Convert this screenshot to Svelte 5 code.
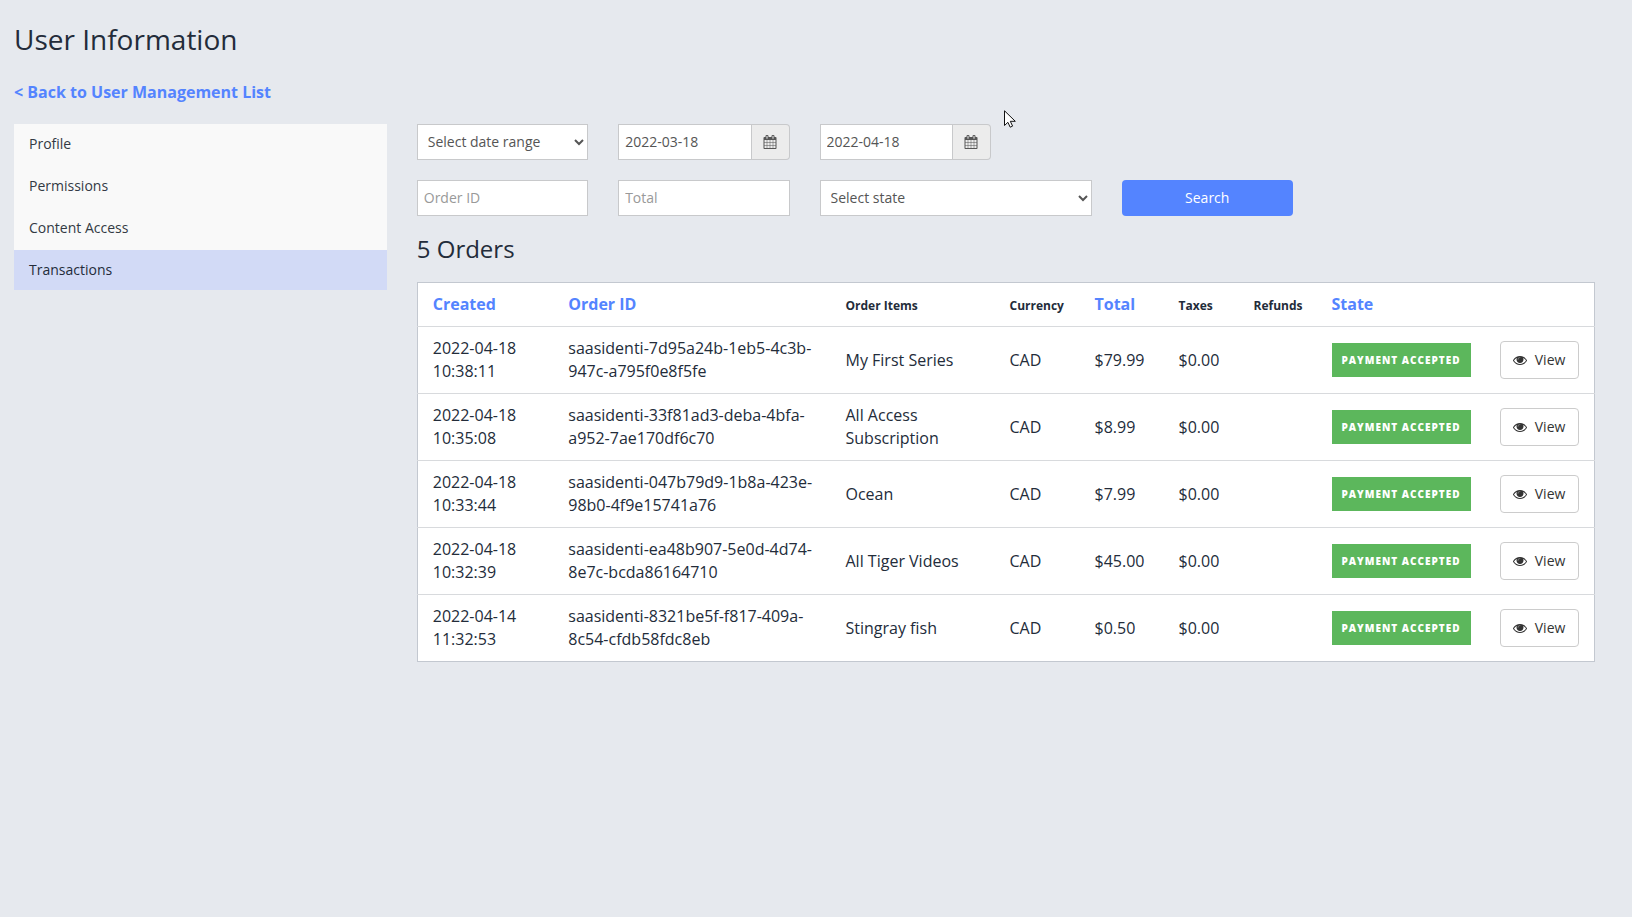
<script lang="ts">
  type Order = {
    created: string;
    id: string;
    items: string;
    currency: string;
    total: string;
    taxes: string;
    refunds: string;
    state: string;
  };

  const navItems = ["Profile", "Permissions", "Content Access", "Transactions"];
  const activeItem = "Transactions";

  const columns = [
    { key: "created", label: "Created", sortable: true },
    { key: "id", label: "Order ID", sortable: true },
    { key: "items", label: "Order Items", sortable: false },
    { key: "currency", label: "Currency", sortable: false },
    { key: "total", label: "Total", sortable: true },
    { key: "taxes", label: "Taxes", sortable: false },
    { key: "refunds", label: "Refunds", sortable: false },
    { key: "state", label: "State", sortable: true },
  ];

  const orders: Order[] = [
    {
      created: "2022-04-18 10:38:11",
      id: "saasidenti-7d95a24b-1eb5-4c3b-947c-a795f0e8f5fe",
      items: "My First Series",
      currency: "CAD",
      total: "$79.99",
      taxes: "$0.00",
      refunds: "",
      state: "Payment accepted",
    },
    {
      created: "2022-04-18 10:35:08",
      id: "saasidenti-33f81ad3-deba-4bfa-a952-7ae170df6c70",
      items: "All Access Subscription",
      currency: "CAD",
      total: "$8.99",
      taxes: "$0.00",
      refunds: "",
      state: "Payment accepted",
    },
    {
      created: "2022-04-18 10:33:44",
      id: "saasidenti-047b79d9-1b8a-423e-98b0-4f9e15741a76",
      items: "Ocean",
      currency: "CAD",
      total: "$7.99",
      taxes: "$0.00",
      refunds: "",
      state: "Payment accepted",
    },
    {
      created: "2022-04-18 10:32:39",
      id: "saasidenti-ea48b907-5e0d-4d74-8e7c-bcda86164710",
      items: "All Tiger Videos",
      currency: "CAD",
      total: "$45.00",
      taxes: "$0.00",
      refunds: "",
      state: "Payment accepted",
    },
    {
      created: "2022-04-14 11:32:53",
      id: "saasidenti-8321be5f-f817-409a-8c54-cfdb58fdc8eb",
      items: "Stingray fish",
      currency: "CAD",
      total: "$0.50",
      taxes: "$0.00",
      refunds: "",
      state: "Payment accepted",
    },
  ];

  let range = $state("");
  let from = $state("2022-03-18");
  let to = $state("2022-04-18");
  let orderId = $state("");
  let total = $state("");
  let orderState = $state("");
</script>

{#snippet calendar()}
  <svg class="icon" viewBox="0 0 1792 1792" aria-hidden="true">
    <path
      d="M192 1664h288v-288h-288v288zm352 0h320v-288h-320v288zm-352-352h288v-320h-288v320zm352 0h320v-320h-320v320zm-352-384h288v-288h-288v288zm736 736h320v-288h-320v288zm-384-736h320v-288h-320v288zm768 736h288v-288h-288v288zm-384-352h320v-320h-320v320zm-352-864v-288q0-13-9.5-22.5t-22.5-9.5h-64q-13 0-22.5 9.5t-9.5 22.5v288q0 13 9.5 22.5t22.5 9.5h64q13 0 22.5-9.5t9.5-22.5zm736 864h288v-320h-288v320zm-384-384h320v-288h-320v288zm384 0h288v-288h-288v288zm32-480v-288q0-13-9.5-22.5t-22.5-9.5h-64q-13 0-22.5 9.5t-9.5 22.5v288q0 13 9.5 22.5t22.5 9.5h64q13 0 22.5-9.5t9.5-22.5zm384-64v1280q0 52-38 90t-90 38h-1408q-52 0-90-38t-38-90v-1280q0-52 38-90t90-38h128v-96q0-66 47-113t113-47h64q66 0 113 47t47 113v96h384v-96q0-66 47-113t113-47h64q66 0 113 47t47 113v96h128q52 0 90 38t38 90z"
    />
  </svg>
{/snippet}

{#snippet eye()}
  <svg class="icon" viewBox="0 0 1792 1792" aria-hidden="true">
    <path
      d="M1664 960q-152-236-381-353 61 104 61 225 0 185-131.5 316.5t-316.5 131.5-316.5-131.5-131.5-316.5q0-121 61-225-229 117-381 353 133 205 333.5 326.5t434.5 121.5 434.5-121.5 333.5-326.5zm-720-384q0-20-14-34t-34-14q-125 0-214.5 89.5t-89.5 214.5q0 20 14 34t34 14 34-14 14-34q0-86 61-147t147-61q20 0 34-14t14-34zm848 384q0 34-20 69-140 230-376.5 368.5t-499.5 138.5-499.5-139-376.5-368q-20-35-20-69t20-69q140-229 376.5-368t499.5-139 499.5 139 376.5 368q20 35 20 69z"
    />
    <circle class="pupil" cx="896" cy="832" r="384" />
  </svg>
{/snippet}

<div class="page">
  <h1>User Information</h1>
  <a class="back" href="#users">&lt; Back to User Management List</a>

  <div class="layout">
    <nav class="sidebar">
      {#each navItems as item}
        <a href="#{item}" class:active={item === activeItem}>{item}</a>
      {/each}
    </nav>

    <main>
      <form onsubmit={(e) => e.preventDefault()}>
        <select class="control" aria-label="Date range" bind:value={range}>
          <option value="">Select date range</option>
        </select>
        <div class="date">
          <input class="control" type="text" aria-label="From" bind:value={from} />
          <button type="button" aria-label="Pick start date">{@render calendar()}</button>
        </div>
        <div class="date">
          <input class="control" type="text" aria-label="To" bind:value={to} />
          <button type="button" aria-label="Pick end date">{@render calendar()}</button>
        </div>
        <input
          class="control order-id"
          type="text"
          aria-label="Order ID"
          placeholder="Order ID"
          bind:value={orderId}
        />
        <input
          class="control"
          type="text"
          aria-label="Total"
          placeholder="Total"
          bind:value={total}
        />
        <select class="control state" aria-label="State" bind:value={orderState}>
          <option value="">Select state</option>
        </select>
        <button class="search" type="submit">Search</button>
      </form>

      <h2>{orders.length} Orders</h2>

      <table>
        <colgroup>
          {#each columns as column}
            <col class="col-{column.key}" />
          {/each}
          <col class="col-view" />
        </colgroup>
        <thead>
          <tr>
            {#each columns as column}
              <th scope="col">
                {#if column.sortable}
                  <a href="#sort-{column.key}">{column.label}</a>
                {:else}
                  {column.label}
                {/if}
              </th>
            {/each}
            <td></td>
          </tr>
        </thead>
        <tbody>
          {#each orders as order (order.id)}
            <tr>
              <td>{order.created}</td>
              <td>{order.id}</td>
              <td>{order.items}</td>
              <td>{order.currency}</td>
              <td>{order.total}</td>
              <td>{order.taxes}</td>
              <td>{order.refunds}</td>
              <td><span class="badge">{order.state}</span></td>
              <td class="action">
                <button class="view" type="button">{@render eye()} View</button>
              </td>
            </tr>
          {/each}
        </tbody>
      </table>
    </main>
  </div>
</div>

<svg class="cursor" viewBox="0 0 12 18" aria-hidden="true">
  <path d="M.5.8v14.7l3.4-3.2 2.3 4.9 2.4-1.1-2.3-4.8h5z" />
</svg>

<style>
  :global(body) {
    margin: 0;
    background: #fff;
  }

  .page {
    --blue: #5484ff;
    --border: #c8c9cb;
    box-sizing: border-box;
    min-height: calc(100vh - 5px);
    padding: 19px 37px 20px 14px;
    background: #e6e9ee;
    color: #232c3a;
    font: 16px/23px "Open Sans", sans-serif;
  }

  a {
    color: var(--blue);
    text-decoration: none;
  }

  h1,
  h2 {
    margin: 0;
    font-weight: 400;
  }

  h1 {
    font-size: 28px;
    line-height: 40px;
  }

  h2 {
    margin: 16px 0;
    font-size: 24px;
    line-height: 34px;
  }

  .back {
    display: block;
    margin: 22px 0 20px;
    font-weight: 700;
  }

  .layout {
    display: grid;
    grid-template-columns: repeat(12, minmax(0, 1fr));
    column-gap: 30px;
    align-items: start;
  }

  .sidebar {
    grid-column: span 3;
    display: flex;
    flex-direction: column;
    gap: 2px;
    background: #f9f9f9;
    font-size: 14px;
    line-height: 20px;
  }

  .sidebar a {
    padding: 10px 15px;
    color: #333a44;
  }

  .sidebar a.active {
    background: #d2daf6;
    color: #232c3a;
  }

  main {
    grid-column: span 9;
  }

  form {
    display: grid;
    grid-template-columns: repeat(12, minmax(0, 1fr));
    gap: 20px 30px;
  }

  form > * {
    grid-column: span 2;
  }

  .order-id {
    grid-column: 1 / span 2;
  }

  .state {
    grid-column: span 3;
  }

  .control {
    box-sizing: border-box;
    width: 100%;
    min-width: 0;
    height: 36px;
    padding: 5px 6px 7px;
    border: 1px solid var(--border);
    border-radius: 0;
    background: #fff;
    color: #555;
    font: 14px/20px "Open Sans", sans-serif;
  }

  .control::placeholder {
    color: #999;
  }

  .date {
    display: flex;
  }

  .date button {
    flex: none;
    width: 38px;
    padding: 0;
    border: 1px solid var(--border);
    border-left: 0;
    border-radius: 0 4px 4px 0;
    background: #ececec;
    color: #555;
  }

  .icon {
    width: 14px;
    height: 14px;
    vertical-align: -2px;
    fill: currentColor;
  }

  .pupil {
    fill-opacity: 0.6;
  }

  .search {
    border: 0;
    border-radius: 4px;
    background: var(--blue);
    color: #fff;
    font: 14px/20px "Open Sans", sans-serif;
  }

  table {
    width: 100%;
    border: 1px solid #c3c8d0;
    border-collapse: collapse;
    table-layout: fixed;
    background: #fff;
  }

  .col-created {
    width: 136px;
  }

  .col-items {
    width: 164px;
  }

  .col-currency {
    width: 85px;
  }

  .col-total {
    width: 84px;
  }

  .col-taxes {
    width: 75px;
  }

  .col-refunds {
    width: 78px;
  }

  .col-state {
    width: 168px;
  }

  .col-view {
    width: 110px;
  }

  th,
  td {
    padding: 10px 15px;
    text-align: left;
    vertical-align: middle;
  }

  th {
    padding-bottom: 9px;
    font-size: 12px;
    font-weight: 700;
  }

  th a {
    font-size: 16px;
  }

  tbody tr {
    border-top: 1px solid #d8dadd;
  }

  .badge {
    display: inline-block;
    padding: 6px 10px 5px;
    background: #5cb75c;
    color: #fff;
    font-size: 10px;
    font-weight: 800;
    letter-spacing: 1px;
    text-transform: uppercase;
    white-space: nowrap;
  }

  .action {
    padding-block: 0;
  }

  .view {
    box-sizing: border-box;
    width: 100%;
    height: 38px;
    padding: 0;
    border: 1px solid #ccc;
    border-radius: 4px;
    background: #fff;
    color: #333;
    font: 14px/20px "Open Sans", sans-serif;
  }

  .view .icon {
    margin-right: 4px;
  }

  .cursor {
    position: absolute;
    top: 110px;
    left: 1004px;
    width: 12px;
    height: 18px;
    fill: #fff;
    stroke: #111;
  }
</style>
